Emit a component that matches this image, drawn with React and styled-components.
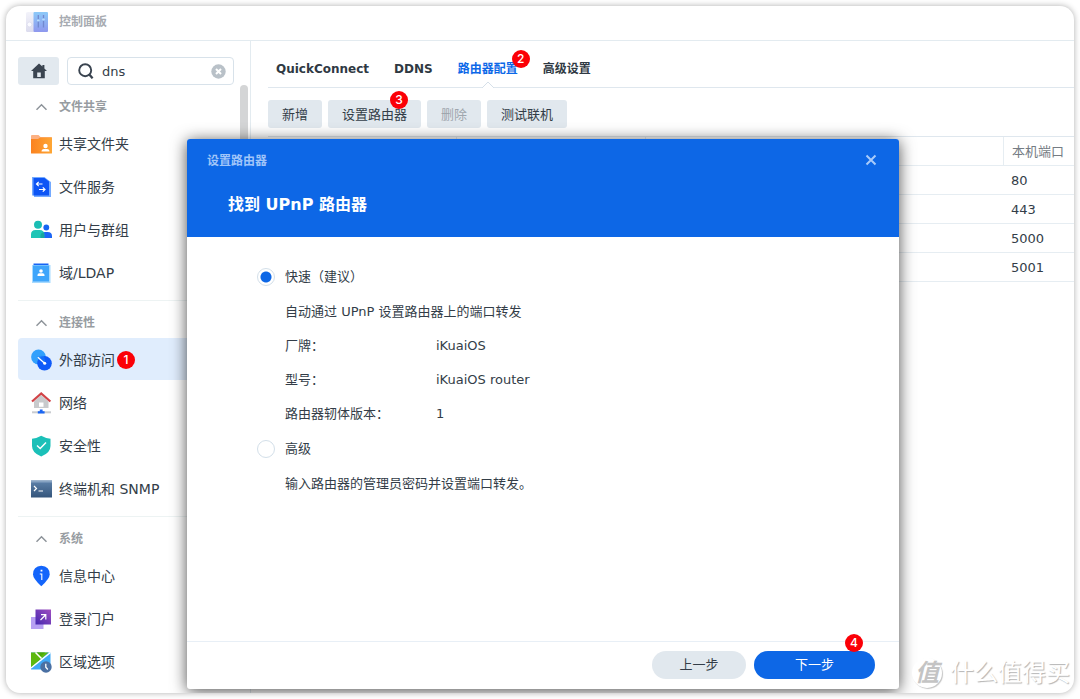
import { useState } from "react";
import styled, { createGlobalStyle } from "styled-components";

const GlobalStyle = createGlobalStyle`
  *,
  *::before,
  *::after {
    box-sizing: border-box;
  }

  body {
    margin: 0;
    background: #fff;
    color: #333d48;
    font-family: "DejaVu Sans", "Noto Sans CJK SC", sans-serif;
    font-size: 13px;
    line-height: 20px;
  }

  button,
  input {
    font: inherit;
    color: inherit;
  }

  button {
    border: 0;
    cursor: pointer;
  }

  h1,
  h2,
  h3,
  p,
  ul,
  dl,
  dd {
    margin: 0;
    padding: 0;
  }
`;

const Page = styled.div`
  display: flex;
  min-height: 100vh;
  padding: 6px;
`;

const Window = styled.div`
  position: relative;
  flex: 1;
  display: flex;
  flex-direction: column;
  background: #fff;
  border-radius: 14px;
  box-shadow: 0 0 6px rgba(0, 0, 0, 0.32);
  overflow: hidden;
`;

const TitleBar = styled.header`
  display: flex;
  align-items: center;
  gap: 10px;
  height: 35px;
  padding: 0 18px 2px;
  border-bottom: 1px solid #e3ebf0;

  h1 {
    color: #a7abb1;
    font-size: 12px;
    font-weight: 700;
  }
`;

const Body = styled.div`
  flex: 1;
  display: flex;
`;

const Sidebar = styled.aside`
  position: relative;
  flex: 0 0 245px;
  min-width: 0;
  padding: 16px 16px 10px 12px;
  border-right: 1px solid #e3ebf0;
`;

const ScrollThumb = styled.div`
  position: absolute;
  top: 44px;
  right: 2px;
  width: 8px;
  height: 320px;
  border-radius: 4px;
  background: #d4d5d6;
`;

const SearchRow = styled.div`
  display: flex;
  gap: 8px;
`;

const HomeButton = styled.button`
  display: grid;
  place-items: center;
  width: 41px;
  height: 28px;
  padding: 0;
  border-radius: 3px;
  background: #e2e9ef;
`;

const SearchBox = styled.div`
  flex: 1;
  min-width: 0;
  display: flex;
  align-items: center;
  gap: 8px;
  height: 28px;
  padding: 0 7px 0 10px;
  border: 1px solid #d8e2ea;
  border-radius: 4px;

  svg {
    flex-shrink: 0;
  }

  input {
    flex: 1;
    min-width: 0;
    padding: 2px 0 0;
    border: 0;
    outline: none;
    background: none;
  }

  button {
    display: grid;
    padding: 0;
    background: none;
  }
`;

const Group = styled.section`
  padding: 5px 0 7px;
  border-bottom: 1px solid #edf3f3;

  &:last-child {
    padding-bottom: 0;
    border-bottom: 0;
  }
`;

const GroupTitle = styled.button`
  display: flex;
  align-items: center;
  gap: 11px;
  width: 100%;
  height: 32px;
  padding: 2px 17px 0;
  background: none;
  color: #979ca1;
  font-size: 12px;
  font-weight: 700;
`;

const NavList = styled.ul`
  display: grid;
  gap: 1px;
  list-style: none;
`;

const NavLink = styled.a`
  display: flex;
  align-items: center;
  gap: 7px;
  height: 42px;
  padding: 1px 12px 0;
  border-radius: 4px;
  background: ${({ $active }) => ($active ? "#e0edfd" : "transparent")};
  color: inherit;
  font-size: 14px;
  text-decoration: none;
`;

const Anchor = styled.span`
  position: relative;
  display: inline-block;
`;

const Badge = styled.span`
  position: absolute;
  top: ${({ $top }) => $top}px;
  right: ${({ $right }) => $right}px;
  width: 18px;
  height: 18px;
  border-radius: 50%;
  background: #fb0007;
  color: #fff;
  font-family: Inter, "Liberation Sans", sans-serif;
  font-size: 12px;
  font-weight: 500;
  line-height: 18px;
  text-align: center;
`;

const Main = styled.main`
  flex: 1;
  min-width: 0;
  padding: 10px 0 0 17px;
`;

const Tabs = styled.nav`
  display: flex;
  gap: 25px;
  height: 37px;
  padding: 0 8px;
  border-bottom: 1px solid #dfe7ee;
`;

const Tab = styled.button`
  position: relative;
  padding: 0;
  background: none;
  color: ${({ $active }) => ($active ? "#0c68e8" : "#2f3943")};
  font-size: 12px;
  font-weight: 700;
`;

const TabPointer = styled.svg`
  position: absolute;
  bottom: -1px;
  left: 50%;
  margin-left: -6px;
`;

const Toolbar = styled.div`
  display: flex;
  gap: 6px;
  padding: 12px 0 8px;
`;

const ToolButton = styled.button`
  position: relative;
  height: 28px;
  padding: 1px 14px 0;
  border-radius: 3px;
  background: #e1e8ee;

  &:disabled {
    color: #9fa6ad;
  }
`;

const PortTable = styled.table`
  width: 100%;
  border-top: 1px solid #dfe7ee;
  border-collapse: separate;
  border-spacing: 0;
  table-layout: fixed;

  th,
  td {
    height: 29px;
    padding: 2px 8px 0;
    border-bottom: 1px solid #e6edf2;
    font-weight: 400;
    text-align: left;
  }

  th {
    color: #757c84;
  }

  th + th {
    border-left: 1px solid #e6edf2;
  }
`;

const Dialog = styled.section`
  position: absolute;
  top: 133px;
  right: 175px;
  bottom: 4px;
  left: 181px;
  display: flex;
  flex-direction: column;
  background: #fff;
  border-radius: 3px;
  box-shadow: 0 2px 16px rgba(0, 0, 0, 0.7);
`;

const DialogHeader = styled.header`
  padding: 12px 20px 0;
  height: 98px;
  border-radius: 3px 3px 0 0;
  background: #0d67e6;
  color: #fff;

  h3 {
    padding: 24px 21px 0;
    font-size: 16px;
    font-weight: 700;
  }
`;

const DialogTitle = styled.div`
  display: flex;
  align-items: center;
  justify-content: space-between;
  color: #a0c5f9;

  h2 {
    font-size: 12px;
    font-weight: 700;
    line-height: 20px;
  }

  button {
    display: grid;
    place-items: center;
    width: 16px;
    height: 20px;
    padding: 0 0 2px;
    background: none;
  }
`;

const DialogContent = styled.div`
  flex: 1;
  padding: 22px 70px;
`;

const RadioLabel = styled.label`
  display: flex;
  align-items: center;
  gap: 10px;
  height: 35px;

  input {
    appearance: none;
    width: 18px;
    height: 18px;
    margin: 0;
    border: 1px solid #d3dfe9;
    border-radius: 50%;
    background: #fff;
  }

  input:checked {
    background: radial-gradient(circle, #0d67e6 5px, #fff 6px);
  }
`;

const Description = styled.p`
  padding-left: 28px;
  line-height: 35px;
`;

const Details = styled.dl`
  display: grid;
  grid-template-columns: 151px 1fr;
  padding-left: 28px;
  line-height: 34px;
`;

const DialogFooter = styled.footer`
  display: flex;
  justify-content: flex-end;
  gap: 8px;
  padding: 9px 24px 10px;
  border-top: 1px solid #e8eff6;
`;

const PillButton = styled.button`
  position: relative;
  min-width: ${({ $primary }) => ($primary ? 121 : 94)}px;
  height: 28px;
  padding: 0 24px;
  border-radius: 14px;
  background: ${({ $primary }) => ($primary ? "#0d67e6" : "#e1e8ee")};
  color: ${({ $primary }) => ($primary ? "#fff" : "#333d48")};
`;

const Watermark = styled.div`
  position: absolute;
  right: 4px;
  bottom: 4px;
  display: flex;
  align-items: center;
  gap: 8px;
  color: #fff;
  font-size: 24px;
  line-height: 32px;
  text-shadow: 1px 1px 1px #b4b4b4;
`;

const WatermarkLogo = styled.span`
  width: 30px;
  height: 30px;
  border-radius: 50%;
  background: #fff;
  box-shadow: 1px 1px 1px #c4c4c4;
  color: #c4c4c4;
  font-size: 24px;
  font-style: italic;
  font-weight: 700;
  line-height: 30px;
  text-align: center;
  text-shadow: none;
`;

const Icon = ({ children, size = 22 }) => (
  <svg width={size} height={size} viewBox={`0 0 ${size} ${size}`} fill="none" aria-hidden="true">
    {children}
  </svg>
);

const PanelIcon = () => (
  <svg width="25" height="22" viewBox="0 0 25 22" aria-hidden="true">
    <defs>
      <linearGradient id="panelBlue" x1="0" y1="0" x2="0" y2="1">
        <stop stopColor="#8cc9f8" />
        <stop offset="1" stopColor="#8f98ee" />
      </linearGradient>
      <linearGradient id="panelGrey" x1="0" y1="0" x2="0" y2="1">
        <stop stopColor="#f3f3fa" />
        <stop offset="1" stopColor="#dcdcee" />
      </linearGradient>
    </defs>
    <rect x="2" y="1" width="10" height="20" rx="1.5" fill="url(#panelGrey)" />
    <circle cx="5.500" cy="13.500" r="2.400" fill="#fafaff" stroke="#d6d6ea" strokeWidth=".6" />
    <rect x="9.500" y="1" width="14.500" height="20" rx="1" fill="url(#panelBlue)" />
    <path d="M14.300 4v4M19.500 4v3M14.300 10.500v6M19.500 10v6.500" stroke="#7289cf" strokeWidth="1.300" />
    <path d="M13 9.500h2.600M18.200 8.500h2.600" stroke="#b9dcfb" strokeWidth="1.400" />
  </svg>
);

const HomeIcon = () => (
  <Icon size={18}>
    <path d="M9 1.500 1 9h2.200v7.200h11.600V9H17l-2.600-2.500V3h-2v1.600z" fill="#3a4450" />
    <path d="M7.200 10.500h3.600v4.600H7.200z" fill="#e2e9ef" />
  </Icon>
);

const SearchIcon = () => (
  <Icon size={16}>
    <circle cx="7.200" cy="7.200" r="6" stroke="#3a4450" strokeWidth="1.900" />
    <path d="m11.300 11.500 3.300 3.800" stroke="#3a4450" strokeWidth="2.300" />
  </Icon>
);

const ClearIcon = () => (
  <Icon size={15}>
    <circle cx="7.500" cy="7.500" r="7.200" fill="#b9c1c8" />
    <path d="m5 5 5 5M10 5l-5 5" stroke="#fff" strokeWidth="2" />
  </Icon>
);

const ChevronIcon = () => (
  <svg width="13" height="8" viewBox="0 0 13 8" fill="none" aria-hidden="true">
    <path d="m1.500 6.800 5-5 5 5" stroke="#8f959b" strokeWidth="1.500" />
  </svg>
);

const ShareIcon = () => (
  <Icon>
    <defs>
      <linearGradient id="folder" x1="0" y1="0" x2="1" y2="0">
        <stop stopColor="#fb8220" />
        <stop offset="1" stopColor="#fea634" />
      </linearGradient>
    </defs>
    <path d="M1 3q0-1 1-1h6.500l2 2H21q1 0 1 1v6H1z" fill="#fcb183" />
    <path d="M1 6h7l2-1.500h12V20q0 .5-.5.500h-20Q1 20.500 1 20z" fill="url(#folder)" />
    <circle cx="15.500" cy="13" r="2.200" fill="#fff" />
    <path d="M11.500 18.500q0-2.500 2.500-2.500h3q2.500 0 2.500 2.500z" fill="#fff" />
  </Icon>
);

const FileServiceIcon = () => (
  <Icon>
    <path d="M4 2h11l6 4v15H4z" fill="#74aaff" />
    <path d="M2 1h12.500L19 5v14.500H2z" fill="#74aaff" />
    <path d="M3.500 2h11L19 5.500v14H3.500z" fill="#0d55f5" />
    <path d="M12.500 8H6.500m2.200-2.200L6.500 8l2.200 2.200M9 13.500h6M12.800 11.300l2.200 2.200-2.200 2.200" stroke="#fff" strokeWidth="1.200" />
  </Icon>
);

const UsersIcon = () => (
  <Icon>
    <circle cx="16.300" cy="8.500" r="2.900" fill="#1565f3" />
    <path d="M11 19v-2q0-4 4-4h2.500q4.500 0 4.500 4v2z" fill="#1c66f5" />
    <circle cx="8" cy="5.700" r="4" fill="#1bbdb4" />
    <path d="M1 19v-3.500Q1 11 5.500 11h4q4.800 0 4.800 4.500V19z" fill="#1ec5b6" />
    <path d="M10.500 19v-2q0-3 3-3.800.8.900.8 2.300V19z" fill="#18a6a0" />
  </Icon>
);

const LdapIcon = () => (
  <Icon>
    <path d="M3.500 1.500h15V7h-15z" fill="#1664f5" />
    <path d="M2 3h18.500v18H2z" fill="#a7daff" />
    <path d="M3 3.500h16V19.500H3z" fill="#3ea5fb" />
    <circle cx="11" cy="9" r="1.800" fill="#fff" />
    <path d="M7.500 14v-1q0-1.800 1.800-1.800h3.400q1.800 0 1.800 1.800v1z" fill="#fff" />
  </Icon>
);

const ExternalIcon = () => (
  <Icon>
    <circle cx="8.500" cy="8" r="7.400" fill="#32a0fc" />
    <circle cx="14.500" cy="14.300" r="7.300" fill="#0e5af8" />
    <path d="M7.800 7.600q3-1.200 6.200-.5 1.400 3.400 1 8l-7-4.500q-.6-1.500-.2-3z" fill="#1a7cfa" opacity=".6" />
    <path d="m7.800 8.300 6.800 6" stroke="#fff" strokeWidth="1.200" />
    <circle cx="14.700" cy="14.300" r="1.500" fill="#fff" />
  </Icon>
);

const NetworkIcon = () => (
  <Icon>
    <path d="M11 3 4 9.500V16h14.500V9.500z" fill="#c8cacc" />
    <path d="m2 9.500 9.200-8 9.200 8" stroke="#d14347" strokeWidth="2.200" />
    <path d="M9 10.500h4.500v4.300H9z" fill="#fff" />
    <path d="M2 20.300h19" stroke="#c9ccd0" strokeWidth="2" />
    <path d="M9.800 17.500h2.800v1.700h2v2.300H7.800v-2.300h2z" fill="#1a66f3" />
  </Icon>
);

const ShieldIcon = () => (
  <Icon>
    <path d="M11.200.8q4.300 2.500 9.300 3V11q0 7-9.300 10.400Q2 18 2 11V3.800q5-.5 9.200-3z" fill="#1bc0b8" />
    <path d="m7 10.500 3.200 3 5.800-6" stroke="#fff" strokeWidth="1.400" />
  </Icon>
);

const TerminalIcon = () => (
  <Icon>
    <defs>
      <linearGradient id="terminal" x1="0" y1="0" x2="0" y2="1">
        <stop stopColor="#5e82ab" />
        <stop offset="1" stopColor="#34557b" />
      </linearGradient>
    </defs>
    <path d="M1 2.500h21v17H1z" fill="url(#terminal)" />
    <path d="M1 2.500h21v2H1z" fill="#87a3c2" />
    <path d="m4 8 2.500 2.500L4 13M8.500 13H13" stroke="#fff" strokeWidth="1.200" />
  </Icon>
);

const InfoIcon = () => (
  <Icon>
    <path d="M11.300.7q8.400.5 8.400 8.700 0 4-8.400 11.800Q3 13.400 3 9.400 3 1.200 11.300.7z" fill="#1465fb" />
    <path d="M10.600 4.800h1.800v1.800h-1.800z" fill="#fff" />
    <path d="M9.800 9h2v6" stroke="#fff" strokeWidth="1.100" />
  </Icon>
);

const PortalIcon = () => (
  <Icon>
    <defs>
      <linearGradient id="portal" x1="1" y1="0" x2="0" y2="1">
        <stop stopColor="#a04fc0" />
        <stop offset="1" stopColor="#4428b0" />
      </linearGradient>
    </defs>
    <path d="M1 9h12.500v12H1z" fill="#b7a0f3" />
    <path d="M5.500 1.500H21v15H5.500z" fill="url(#portal)" />
    <path d="m10.500 12 5-5M11 6.700h4.800v4.800" stroke="#fff" strokeWidth="1.200" />
  </Icon>
);

const RegionIcon = () => (
  <Icon>
    <path d="M1 1.500h19.500v17H1z" fill="#3fa9f8" />
    <path d="M1 1.500h17.500L1 16.500z" fill="#5db80f" />
    <path d="M7 1.500h8l-4.500 4z" fill="#4aa808" />
    <path d="M1 17 20.500 1.500M5.500 1.500l6 6" stroke="#fff" strokeWidth="1.500" />
    <circle cx="16" cy="16" r="5.700" fill="#4a70a3" />
    <path d="M15.800 12.700v3.500l2 2.300" stroke="#fff" strokeWidth="1.300" />
  </Icon>
);

const CloseIcon = () => (
  <Icon size={12}>
    <path d="m1.500 1.500 9 9M10.500 1.500l-9 9" stroke="#a9cbfa" strokeWidth="2" />
  </Icon>
);

const groups = [
  {
    title: "文件共享",
    items: [
      { label: "共享文件夹", icon: ShareIcon },
      { label: "文件服务", icon: FileServiceIcon },
      { label: "用户与群组", icon: UsersIcon },
      { label: "域/LDAP", icon: LdapIcon },
    ],
  },
  {
    title: "连接性",
    items: [
      { label: "外部访问", icon: ExternalIcon, active: true, step: 1 },
      { label: "网络", icon: NetworkIcon },
      { label: "安全性", icon: ShieldIcon },
      { label: "终端机和 SNMP", icon: TerminalIcon },
    ],
  },
  {
    title: "系统",
    items: [
      { label: "信息中心", icon: InfoIcon },
      { label: "登录门户", icon: PortalIcon },
      { label: "区域选项", icon: RegionIcon },
    ],
  },
];

const details = [
  ["厂牌：", "iKuaiOS"],
  ["型号：", "iKuaiOS router"],
  ["路由器轫体版本：", "1"],
];

const ports = [80, 443, 5000, 5001];

const SettingsSidebar = () => {
  const [query, setQuery] = useState("dns");

  return (
    <Sidebar>
      <ScrollThumb />
      <SearchRow>
        <HomeButton aria-label="主页">
          <HomeIcon />
        </HomeButton>
        <SearchBox>
          <SearchIcon />
          <input
            type="text"
            aria-label="搜索"
            value={query}
            onChange={(e) => setQuery(e.target.value)}
          />
          <button aria-label="清除" onClick={() => setQuery("")}>
            <ClearIcon />
          </button>
        </SearchBox>
      </SearchRow>
      {groups.map((group) => (
        <Group key={group.title}>
          <GroupTitle>
            <ChevronIcon />
            {group.title}
          </GroupTitle>
          <NavList>
            {group.items.map(({ label, icon: ItemIcon, active, step }) => (
              <li key={label}>
                <NavLink href="#" $active={active}>
                  <ItemIcon />
                  <Anchor>
                    {label}
                    {step && (
                      <Badge $top={1} $right={-20}>
                        {step}
                      </Badge>
                    )}
                  </Anchor>
                </NavLink>
              </li>
            ))}
          </NavList>
        </Group>
      ))}
    </Sidebar>
  );
};

const RouterPage = () => (
  <Main>
    <Tabs>
      <Tab>QuickConnect</Tab>
      <Tab>DDNS</Tab>
      <Tab $active>
        路由器配置
        <TabPointer width="12" height="7" viewBox="0 0 12 7">
          <path d="M0 7 6 1l6 6" fill="#fff" stroke="#d6e0e9" />
        </TabPointer>
        <Badge $top={-1} $right={-12}>
          2
        </Badge>
      </Tab>
      <Tab>高级设置</Tab>
    </Tabs>
    <Toolbar>
      <ToolButton>新增</ToolButton>
      <ToolButton>
        设置路由器
        <Badge $top={-9} $right={13}>
          3
        </Badge>
      </ToolButton>
      <ToolButton disabled>删除</ToolButton>
      <ToolButton>测试联机</ToolButton>
    </Toolbar>
    <PortTable>
      <colgroup>
        <col width="188" />
        <col width="189" />
        <col />
        <col width="71" />
      </colgroup>
      <thead>
        <tr>
          <th />
          <th />
          <th />
          <th>本机端口</th>
        </tr>
      </thead>
      <tbody>
        {ports.map((port) => (
          <tr key={port}>
            <td />
            <td />
            <td />
            <td>{port}</td>
          </tr>
        ))}
      </tbody>
    </PortTable>
  </Main>
);

const RouterDialog = () => {
  const [mode, setMode] = useState("quick");

  return (
    <Dialog role="dialog" aria-labelledby="dialogTitle">
      <DialogHeader>
        <DialogTitle>
          <h2 id="dialogTitle">设置路由器</h2>
          <button aria-label="关闭">
            <CloseIcon />
          </button>
        </DialogTitle>
        <h3>找到 UPnP 路由器</h3>
      </DialogHeader>
      <DialogContent>
        <RadioLabel>
          <input
            type="radio"
            name="mode"
            checked={mode === "quick"}
            onChange={() => setMode("quick")}
          />
          快速（建议）
        </RadioLabel>
        <Description>自动通过 UPnP 设置路由器上的端口转发</Description>
        <Details>
          {details.map(([term, value]) => [
            <dt key={term}>{term}</dt>,
            <dd key={value}>{value}</dd>,
          ])}
        </Details>
        <RadioLabel>
          <input
            type="radio"
            name="mode"
            checked={mode === "advanced"}
            onChange={() => setMode("advanced")}
          />
          高级
        </RadioLabel>
        <Description>输入路由器的管理员密码并设置端口转发。</Description>
      </DialogContent>
      <DialogFooter>
        <PillButton>上一步</PillButton>
        <PillButton $primary>
          下一步
          <Badge $top={-17} $right={12}>
            4
          </Badge>
        </PillButton>
      </DialogFooter>
    </Dialog>
  );
};

const App = () => (
  <>
    <GlobalStyle />
    <Page>
      <Window>
        <TitleBar>
          <PanelIcon />
          <h1>控制面板</h1>
        </TitleBar>
        <Body>
          <SettingsSidebar />
          <RouterPage />
        </Body>
        <RouterDialog />
        <Watermark>
          <WatermarkLogo>值</WatermarkLogo>
          什么值得买
        </Watermark>
      </Window>
    </Page>
  </>
);

export default App;
